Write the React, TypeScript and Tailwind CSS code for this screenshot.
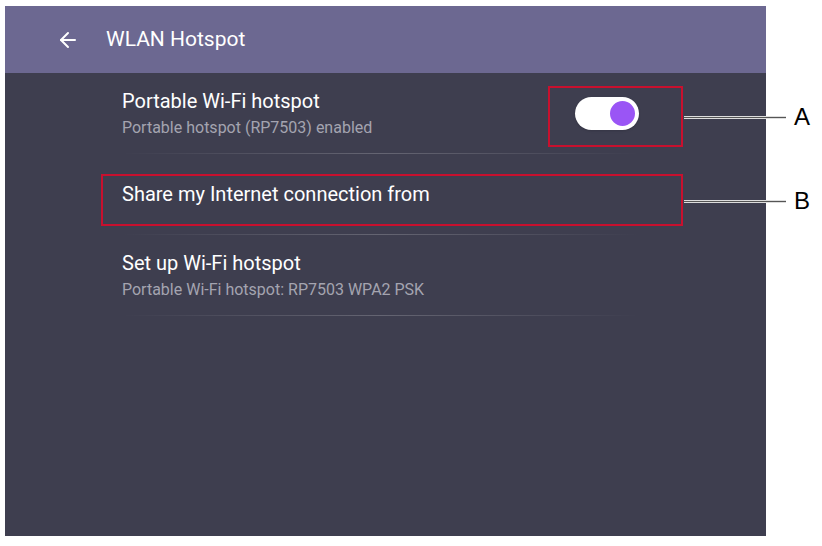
import { ArrowLeft } from "lucide-react";

const font = { fontFamily: "Roboto, 'Noto Sans', sans-serif" };

function Divider() {
	return (
		<div className="h-px w-full bg-gradient-to-r from-transparent via-white/20 to-transparent" />
	);
}

function Toggle() {
	return (
		<div className="flex h-[33px] w-[64px] items-center justify-end rounded-full bg-white pr-[2px] shadow">
			<div className="h-[29px] w-[29px] rounded-full border-2 border-white bg-[#9a55f5]" />
		</div>
	);
}

function Callout({ label }: { label: string }) {
	return (
		<div className="absolute left-[684px] flex items-center">
			<div className="h-[3px] w-[102px] border-y border-white/80 bg-[#555]" />
			<span className="ml-[8px] text-[24px] leading-none text-black" style={{ fontFamily: "'Liberation Sans', sans-serif" }}>
				{label}
			</span>
		</div>
	);
}

export default function App() {
	return (
		<div className="relative h-[546px] w-[822px] bg-white" style={font}>
			<div className="ml-[5px] pt-[6px]">
				<div className="flex h-[530px] w-[761px] flex-col bg-[#3e3e4f]">
					{/* header */}
					<div className="flex h-[67px] items-center bg-[#6c6891] pl-[51px] text-white">
						<ArrowLeft size={24} strokeWidth={2} />
						<span className="ml-[26px] text-[21px]">WLAN Hotspot</span>
					</div>

					{/* rows */}
					<div className="flex flex-col pr-[127px] pl-[117px]">
						<div className="flex h-[80px] items-center justify-between">
							<div className="flex flex-col">
								<span className="text-[20px] leading-[26px] text-white">Portable Wi-Fi hotspot</span>
								<span className="mt-[4px] text-[16px] leading-[20px] text-[#a4a4b0]">
									Portable hotspot (RP7503) enabled
								</span>
							</div>
							<Toggle />
						</div>
						<Divider />
						<div className="flex h-[80px] items-center">
							<span className="text-[20px] leading-[26px] text-white">Share my Internet connection from</span>
						</div>
						<Divider />
						<div className="flex h-[80px] flex-col justify-center">
							<span className="text-[20px] leading-[26px] text-white">Set up Wi-Fi hotspot</span>
							<span className="mt-[4px] text-[16px] leading-[20px] text-[#a4a4b0]">
								Portable Wi-Fi hotspot: RP7503 WPA2 PSK
							</span>
						</div>
						<Divider />
					</div>
				</div>
			</div>

			{/* annotations */}
			<div className="absolute top-[86px] left-[548px] h-[61px] w-[135px] border-2 border-[#c8102e]" />
			<div className="absolute top-[174px] left-[101px] h-[52px] w-[582px] border-2 border-[#c8102e]" />
			<div className="absolute top-[105px] left-0">
				<Callout label="A" />
			</div>
			<div className="absolute top-[189px] left-0">
				<Callout label="B" />
			</div>
		</div>
	);
}
